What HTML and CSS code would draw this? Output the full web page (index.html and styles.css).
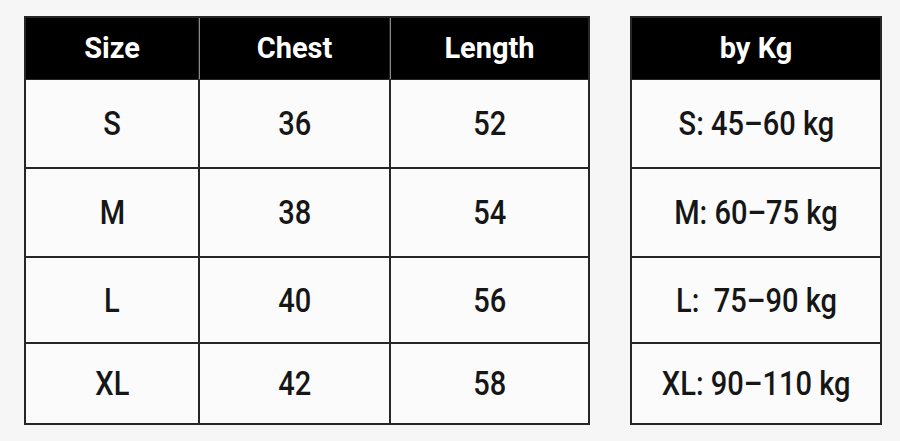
FILE: index.html
```html
<!DOCTYPE html>
<html lang="en">
<head>
<meta charset="utf-8">
<title>Size Chart</title>
<link rel="stylesheet" href="styles.css">
</head>
<body>
<div class="page">
  <div class="chart chart-main">
    <div class="cell head">Size</div>
    <div class="cell head">Chest</div>
    <div class="cell head">Length</div>
    <div class="cell"><span class="val">S</span></div>
    <div class="cell"><span class="val">36</span></div>
    <div class="cell"><span class="val">52</span></div>
    <div class="cell"><span class="val">M</span></div>
    <div class="cell"><span class="val">38</span></div>
    <div class="cell"><span class="val">54</span></div>
    <div class="cell"><span class="val">L</span></div>
    <div class="cell"><span class="val">40</span></div>
    <div class="cell"><span class="val">56</span></div>
    <div class="cell"><span class="val">XL</span></div>
    <div class="cell"><span class="val">42</span></div>
    <div class="cell"><span class="val">58</span></div>
  </div>
  <div class="chart chart-kg">
    <div class="cell head">by Kg</div>
    <div class="cell"><span class="val">S: 45–60 kg</span></div>
    <div class="cell"><span class="val">M: 60–75 kg</span></div>
    <div class="cell"><span class="val">L:&nbsp; 75–90 kg</span></div>
    <div class="cell"><span class="val">XL: 90–110 kg</span></div>
  </div>
</div>
</body>
</html>
```
FILE: styles.css
```css
html, body {
  margin: 0;
  padding: 0;
  background: #f6f6f6;
}
.page {
  display: flex;
  gap: 40px;
  padding: 16px 0 0 24px;
  font-family: Roboto, "Liberation Sans", Arial, sans-serif;
}
.chart {
  display: grid;
  gap: 2px;
  padding: 2px;
  background: #262626;
  grid-template-rows: 60px 87px 87px 84px 79px;
}
.chart-main {
  grid-template-columns: 172px 189px 197px;
}
.chart-kg {
  grid-template-columns: 248px;
}
.cell {
  display: flex;
  align-items: center;
  justify-content: center;
  background: #fbfbfb;
  color: #161616;
  font-size: 33px;
  font-weight: 500;
}
.val {
  display: inline-block;
  white-space: nowrap;
  transform: scaleX(0.88);
}
.head {
  background: #000;
  color: #fff;
  font-weight: 700;
  font-size: 29px;
  margin-bottom: -1px;
  padding-bottom: 1px;
}
.head + .head {
  border-left: 1px solid #8a8a8a;
  margin-left: -1px;
}
```
